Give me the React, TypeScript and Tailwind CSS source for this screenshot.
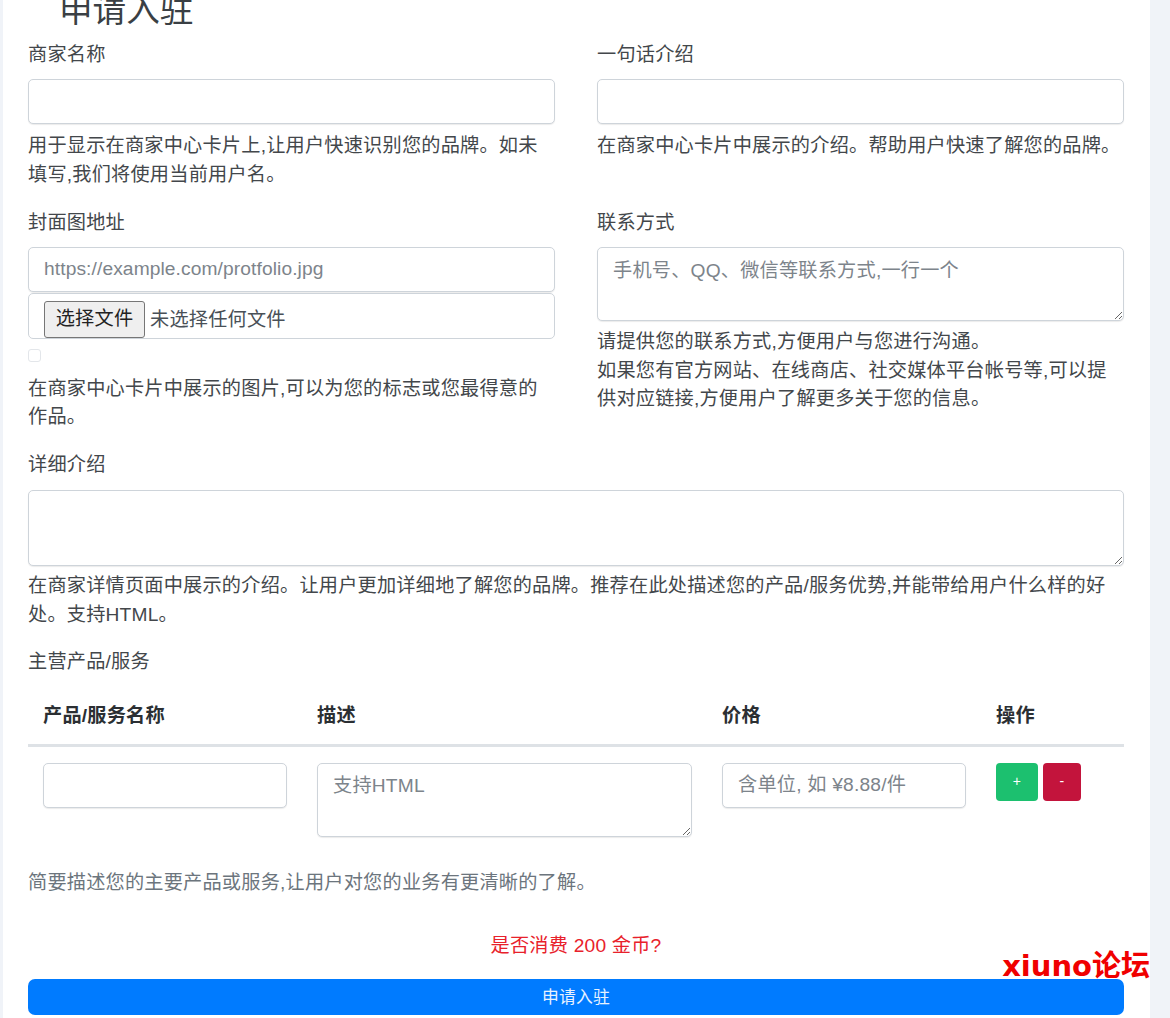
const fieldCls =
  "block w-full rounded-[5px] border border-[#ced4da] bg-white px-[15px] text-[19.2px] text-[#495057] placeholder:text-[#7d848b] outline-none shadow-[0_1px_1px_rgba(0,0,0,0.08)]";

function Label({ children }: { children: React.ReactNode }) {
  return <div className="mb-[10px] h-[29px] leading-[29px]">{children}</div>;
}

function Help({ children }: { children: React.ReactNode }) {
  return <p className="mt-[8px] leading-[28.8px]">{children}</p>;
}

export default function App() {
  return (
    <div className="h-[1018px] overflow-hidden bg-[#f0f3f8] pl-[3px] pr-[20px] font-['Liberation_Sans','Noto_Sans_CJK_SC',sans-serif] text-[19.2px] tracking-[0.2px] text-[#43474b]">
      <div className="h-[1040px] bg-white pl-[25px] pr-[26px]">
        <h2 className="-mt-[10px] h-[50px] pl-[31px] text-[33.6px] font-normal leading-[41px] tracking-normal text-[#3a3f44]">
          申请入驻
        </h2>

        <div className="grid grid-cols-[527px_527px] gap-x-[42px]">
          <div>
            <Label>商家名称</Label>
            <input className={`${fieldCls} h-[45px]`} />
            <Help>用于显示在商家中心卡片上,让用户快速识别您的品牌。如未填写,我们将使用当前用户名。</Help>

            <div className="mt-[18px]">
              <Label>封面图地址</Label>
              <input className={`${fieldCls} h-[45px] tracking-[0.1px]`} placeholder="https://example.com/protfolio.jpg" />
              <div className="mt-[1px] flex h-[46px] items-start rounded-[5px] border border-[#ced4da] bg-white pl-[15px] pt-[7px] text-[#495057]">
                <button
                  type="button"
                  className="flex h-[37px] w-[101px] items-center justify-center rounded-[3px] border border-[#767676] bg-[#efefef] text-[#222]"
                >
                  选择文件
                </button>
                <span className="ml-[5px] leading-[37px]">未选择任何文件</span>
              </div>
              <div className="mt-[10px] h-[13px] w-[13px] rounded-[3px] border border-[#e3e6ea] bg-white" />
              <p className="mt-[13px] leading-[28.8px]">在商家中心卡片中展示的图片,可以为您的标志或您最得意的作品。</p>
            </div>
          </div>

          <div>
            <Label>一句话介绍</Label>
            <input className={`${fieldCls} h-[45px]`} />
            <Help>在商家中心卡片中展示的介绍。帮助用户快速了解您的品牌。</Help>

            <div className="mt-[47px]">
              <Label>联系方式</Label>
              <textarea
                className={`${fieldCls} h-[74px] py-[9px] leading-[28.8px]`}
                placeholder="手机号、QQ、微信等联系方式,一行一个"
              />
              <p className="mt-[7px] leading-[28.8px]">
                请提供您的联系方式,方便用户与您进行沟通。
                <br />
                如果您有官方网站、在线商店、社交媒体平台帐号等,可以提供对应链接,方便用户了解更多关于您的信息。
              </p>
            </div>
          </div>
        </div>

        <div className="mt-[18px]">
          <div className="mb-[11px] h-[29px] leading-[29px]">详细介绍</div>
          <textarea className={`${fieldCls} h-[76px]`} />
          <p className="mt-[6px] leading-[28.8px]">
            在商家详情页面中展示的介绍。让用户更加详细地了解您的品牌。推荐在此处描述您的产品/服务优势,并能带给用户什么样的好处。支持HTML。
          </p>
        </div>

        <div className="mt-[17px]">
          <Label>主营产品/服务</Label>
          <table className="w-full table-fixed border-collapse">
            <thead>
              <tr className="border-b-[3px] border-[#dee2e6] text-left text-[#2b2f33]">
                <th className="w-[274px] px-[15px] pb-[14px] pt-[15px] font-bold leading-[29px]">产品/服务名称</th>
                <th className="w-[405px] px-[15px] pb-[14px] pt-[15px] font-bold leading-[29px]">描述</th>
                <th className="w-[274px] px-[15px] pb-[14px] pt-[15px] font-bold leading-[29px]">价格</th>
                <th className="px-[15px] pb-[14px] pt-[15px] font-bold leading-[29px]">操作</th>
              </tr>
            </thead>
            <tbody>
              <tr className="align-top">
                <td className="px-[15px] pb-[15px] pt-[16px]">
                  <input className={`${fieldCls} h-[45px]`} />
                </td>
                <td className="px-[15px] pb-[15px] pt-[16px]">
                  <textarea className={`${fieldCls} h-[74px] py-[8px] leading-[28.8px]`} placeholder="支持HTML" />
                </td>
                <td className="px-[15px] pb-[15px] pt-[16px]">
                  <input className={`${fieldCls} h-[45px]`} placeholder="含单位, 如 ¥8.88/件" />
                </td>
                <td className="px-[15px] pb-[15px] pt-[16px]">
                  <div className="flex gap-[5px]">
                    <button type="button" className="h-[38px] w-[42px] rounded-[4px] bg-[#1cc06f] text-[14px] text-white">
                      +
                    </button>
                    <button type="button" className="h-[38px] w-[38px] rounded-[4px] bg-[#c3143c] text-[14px] text-white">
                      -
                    </button>
                  </div>
                </td>
              </tr>
            </tbody>
          </table>
          <p className="mt-[17px] leading-[28.8px] text-[#6c757d]">简要描述您的主要产品或服务,让用户对您的业务有更清晰的了解。</p>
        </div>

        <div className="relative mt-[34px]">
          <p className="text-center leading-[28.8px] text-[#e8212b]">是否消费 200 金币?</p>
          <button
            type="button"
            className="mt-[19px] block h-[36px] w-full rounded-[7px] bg-[#007bff] text-[16.8px] text-[#e8f2ff]"
          >
            申请入驻
          </button>
          <span className="absolute -right-[26px] top-[16px] font-['DejaVu_Sans','Noto_Sans_CJK_SC',sans-serif] text-[29px] font-bold leading-[36px] tracking-normal text-[#f00000]">
            xiuno论坛
          </span>
        </div>
      </div>
    </div>
  );
}
